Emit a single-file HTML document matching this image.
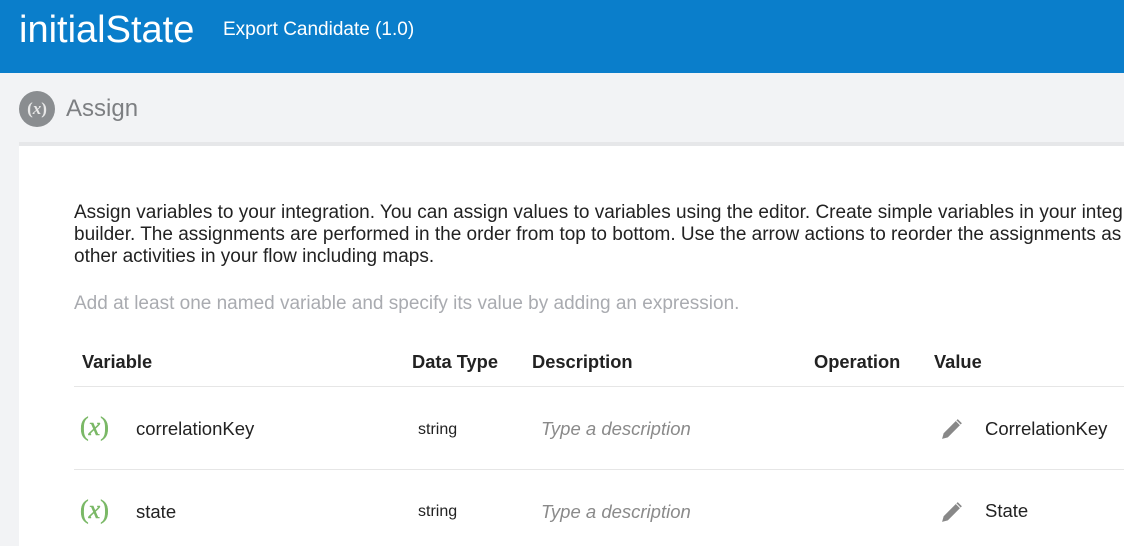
<!DOCTYPE html>
<html><head><style>
body{margin:0;width:1124px;height:533px;overflow:hidden;background:#f2f3f5;font-family:"Liberation Sans",sans-serif;position:relative}
.hdr{position:absolute;left:0;top:0;width:1124px;height:73px;background:#0a7ecb;color:#fff}
.t1{position:absolute;left:19px;top:9px;font-size:38px}
.t2{position:absolute;left:223px;top:19px;font-size:19px}
.ic{position:absolute;left:19px;top:91px;width:36px;height:36px;border-radius:50%;background:#8a8d90;color:#e8e8e8;font:bold 17px "Liberation Serif",serif;text-align:center;line-height:35px}
.as{position:absolute;left:66px;top:95px;font-size:24px;color:#7d7f82}
.panel{position:absolute;left:19px;top:142px;width:1105px;height:400px;background:#fff;border-top:4px solid #e6e7e9}
.p{position:absolute;left:74px;top:202px;font-size:19px;line-height:22px;color:#222;white-space:nowrap}
.ph{position:absolute;left:74px;top:293px;font-size:19px;color:#a9abb0}
.th{position:absolute;top:351px;font-size:18.3px;font-weight:bold;color:#222}
.hr{position:absolute;left:74px;width:1050px;height:1px;background:#e6e6e6}
.x{position:absolute;left:80px;font:26px "Liberation Serif",serif;color:#7ab866;-webkit-text-stroke:0.5px #7ab866}
.x i{font-style:italic}
.c{position:absolute;font-size:18.5px;color:#222}
.s{position:absolute;left:418px;font-size:16px;color:#222}
.d{position:absolute;left:541px;font-size:18.5px;font-style:italic;color:#8a8a8a}
.pen{position:absolute;left:940px}
</style></head><body>
<div class="hdr"><div class="t1">initialState</div><div class="t2">Export Candidate (1.0)</div></div>
<div class="ic">(<i>x</i>)</div><div class="as">Assign</div>
<div class="panel"></div>
<div class="p">Assign variables to your integration. You can assign values to variables using the editor. Create simple variables in your integration<br>builder. The assignments are performed in the order from top to bottom. Use the arrow actions to reorder the assignments as<br>other activities in your flow including maps.</div>
<div class="ph">Add at least one named variable and specify its value by adding an expression.</div>
<div class="th" style="left:82px">Variable</div>
<div class="th" style="left:412px">Data Type</div>
<div class="th" style="left:532px">Description</div>
<div class="th" style="left:814px">Operation</div>
<div class="th" style="left:934px">Value</div>
<div class="hr" style="top:386px"></div>
<div class="hr" style="top:469px"></div>
<div class="x" style="top:412px">(<i>x</i>)</div><div class="c" style="left:136px;top:418px">correlationKey</div>
<div class="s" style="top:421px">string</div><div class="d" style="top:418px">Type a description</div>
<svg class="pen" style="top:416px" width="25" height="25" viewBox="0 0 24 24"><path d="M2 22l1.5-5.5L17 3l4 4L7.5 20.5z" fill="#888"/><path d="M15.5 4.5l4 4" stroke="#fff" stroke-width="1"/></svg>
<div class="c" style="left:985px;top:418px">CorrelationKey</div>
<div class="x" style="top:495px">(<i>x</i>)</div><div class="c" style="left:136px;top:501px">state</div>
<div class="s" style="top:503px">string</div><div class="d" style="top:501px">Type a description</div>
<svg class="pen" style="top:499px" width="25" height="25" viewBox="0 0 24 24"><path d="M2 22l1.5-5.5L17 3l4 4L7.5 20.5z" fill="#888"/><path d="M15.5 4.5l4 4" stroke="#fff" stroke-width="1"/></svg>
<div class="c" style="left:985px;top:500px">State</div>
</body></html>
